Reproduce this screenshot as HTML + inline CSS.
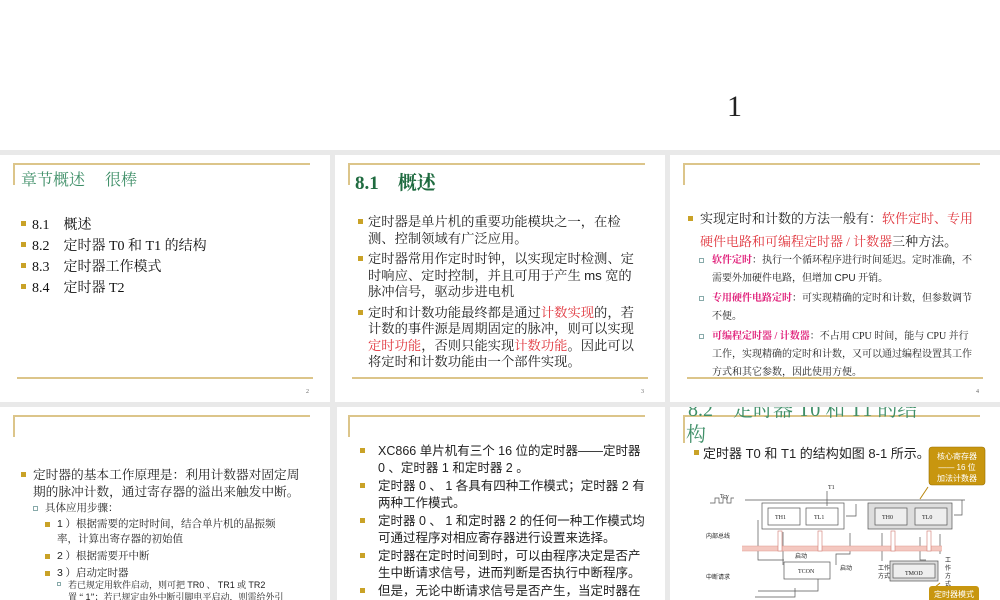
<!DOCTYPE html>
<html><head><meta charset="utf-8"><style>
*{margin:0;padding:0;box-sizing:border-box}
body{width:1000px;height:600px;overflow:hidden;background:#e9e9e9;position:relative;font-family:"Liberation Serif","Noto Serif CJK SC","Noto Sans CJK SC",serif;color:#222}
.top{position:absolute;left:0;top:0;width:1000px;height:150px;background:#fff}
.s{position:absolute;background:#fff;overflow:hidden}
.hl{position:absolute;height:2px;background:#dcc58a}
.vl{position:absolute;width:2px;background:#dcc58a}
.t{position:absolute;white-space:nowrap}
.b{position:absolute;width:5px;height:5px;background:#c9a227}
.sb{position:absolute;width:5px;height:5px;border:1px solid #8aa;}
.pn{position:absolute;font-size:6px;color:#666}
.r{color:#e0343c}
.m{color:#e0207a}
.sans{font-family:"Liberation Sans","Noto Sans CJK SC",sans-serif}
</style></head><body>
<div class="top"><div class="t" style="left:727px;top:90px;font-size:30px;font-family:'Liberation Serif',serif">1</div></div>

<!-- slide 1 -->
<div class="s" style="left:0;top:155px;width:330px;height:247px">
<div class="hl" style="left:13px;top:8px;width:297px"></div><div class="vl" style="left:13px;top:8px;height:22px"></div>
<div class="t" style="left:21px;top:12px;font-size:16px;color:#3f8f68">章节概述　 很棒</div>
<div class="b" style="left:21px;top:66px"></div><div class="t" style="left:32px;top:59px;font-size:14px;color:#111">8.1　概述</div>
<div class="b" style="left:21px;top:87px"></div><div class="t" style="left:32px;top:80px;font-size:14px;color:#111">8.2　定时器 T0 和 T1 的结构</div>
<div class="b" style="left:21px;top:108px"></div><div class="t" style="left:32px;top:101px;font-size:14px;color:#111">8.3　定时器工作模式</div>
<div class="b" style="left:21px;top:129px"></div><div class="t" style="left:32px;top:122px;font-size:14px;color:#111">8.4　定时器 T2</div>
<div class="hl" style="left:17px;top:222px;width:296px"></div>
<div class="pn" style="left:306px;top:234px">2</div>
</div>

<!-- slide 2 -->
<div class="s" style="left:335px;top:155px;width:330px;height:247px">
<div class="hl" style="left:13px;top:8px;width:297px"></div><div class="vl" style="left:13px;top:8px;height:22px"></div>
<div class="t" style="left:20px;top:13px;font-size:19px;color:#1f6b40;font-weight:bold">8.1　概述</div>
<div style="position:absolute;left:33px;top:59px;width:276px;font-size:13.3px;line-height:16.5px">
<div style="position:relative;margin-bottom:4px"><div class="b" style="left:-10px;top:5px"></div>定时器是单片机的重要功能模块之一，在检测、控制领域有广泛应用。</div>
<div style="position:relative;margin-bottom:4px"><div class="b" style="left:-10px;top:5px"></div>定时器常用作定时时钟，以实现定时检测、定时响应、定时控制，并且可用于产生 <span class="sans">ms</span> 宽的脉冲信号，驱动步进电机</div>
<div style="position:relative"><div class="b" style="left:-10px;top:5px"></div>定时和计数功能最终都是通过<span class="r">计数实现</span>的，若计数的事件源是周期固定的脉冲，则可以实现<span class="r">定时功能</span>，否则只能实现<span class="r">计数功能</span>。因此可以将定时和计数功能由一个部件实现。</div>
</div>
<div class="hl" style="left:17px;top:222px;width:296px"></div>
<div class="pn" style="left:306px;top:234px">3</div>
</div>

<!-- slide 3 -->
<div class="s" style="left:670px;top:155px;width:330px;height:247px">
<div class="hl" style="left:13px;top:8px;width:297px"></div><div class="vl" style="left:13px;top:8px;height:22px"></div>
<div style="position:absolute;left:30px;top:52px;width:280px;font-size:13px;line-height:23px">
<div style="position:relative"><div class="b" style="left:-12px;top:9px"></div>实现定时和计数的方法一般有：<span class="r">软件定时、专用硬件电路和可编程定时器 / 计数器</span>三种方法。</div>
</div>
<div style="position:absolute;left:42px;top:97px;width:262px;font-size:10px;line-height:18px">
<div style="position:relative;margin-bottom:2px"><div class="sb" style="left:-13px;top:6px"></div><b class="m">软件定时</b>：执行一个循环程序进行时间延迟。定时准确，不需要外加硬件电路，但增加 <span class="sans">CPU</span> 开销。</div>
<div style="position:relative;margin-bottom:2px"><div class="sb" style="left:-13px;top:6px"></div><b class="m">专用硬件电路定时</b>：可实现精确的定时和计数，但参数调节不便。</div>
<div style="position:relative"><div class="sb" style="left:-13px;top:6px"></div><b class="m">可编程定时器 / 计数器</b>：不占用 CPU 时间，能与 CPU 并行工作，实现精确的定时和计数，又可以通过编程设置其工作方式和其它参数，因此使用方便。</div>
</div>
<div class="hl" style="left:17px;top:222px;width:296px"></div>
<div class="pn" style="left:306px;top:234px">4</div>
</div>

<!-- slide 4 -->
<div class="s" style="left:0;top:407px;width:330px;height:193px">
<div class="hl" style="left:13px;top:8px;width:297px"></div><div class="vl" style="left:13px;top:8px;height:22px"></div>
<div style="position:absolute;left:33px;top:60px;width:275px;font-size:12.7px;line-height:17px">
<div style="position:relative"><div class="b" style="left:-12px;top:5px"></div>定时器的基本工作原理是：利用计数器对固定周期的脉冲计数，通过寄存器的溢出来触发中断。</div></div>
<div style="position:absolute;left:45px;top:94px;width:260px;font-size:10.5px;line-height:16.5px">
<div style="position:relative"><div class="sb" style="left:-12px;top:5px"></div>具体应用步骤：</div></div>
<div style="position:absolute;left:57px;top:110px;width:232px;font-size:10.5px;line-height:15px">
<div style="position:relative;margin-bottom:2px"><div class="b" style="left:-12px;top:5px"></div><span class="sans">1</span> ）根据需要的定时时间，结合单片机的晶振频率，计算出寄存器的初始值</div>
<div style="position:relative;margin-bottom:2px"><div class="b" style="left:-12px;top:5px"></div><span class="sans">2</span> ）根据需要开中断</div>
<div style="position:relative;margin-bottom:2px"><div class="b" style="left:-12px;top:5px"></div><span class="sans">3</span> ）启动定时器</div></div>
<div style="position:absolute;left:68px;top:172px;width:232px;font-size:9px;line-height:12px">
<div style="position:relative"><div class="sb" style="left:-11px;top:3px;width:4px;height:4px"></div>若已规定用软件启动，则可把 <span class="sans">TR0</span> 、 <span class="sans">TR1</span> 或 <span class="sans">TR2</span><br>置 “ <span class="sans">1</span>”；若已规定由外中断引脚电平启动，则需给外引</div></div>
</div>

<!-- slide 5 -->
<div class="s" style="left:337px;top:407px;width:328px;height:193px">
<div class="hl" style="left:11px;top:8px;width:297px"></div><div class="vl" style="left:11px;top:8px;height:22px"></div>
<div style="position:absolute;left:41px;top:36px;width:268px;font-size:12.5px;line-height:16.5px" class="sans">
<div style="position:relative;margin-bottom:2px"><div class="b" style="left:-18px;top:5px"></div>XC866 单片机有三个 16 位的定时器——定时器 0 、定时器 1 和定时器 2 。</div>
<div style="position:relative;margin-bottom:2px"><div class="b" style="left:-18px;top:5px"></div>定时器 0 、 1 各具有四种工作模式；定时器 2 有两种工作模式。</div>
<div style="position:relative;margin-bottom:2px"><div class="b" style="left:-18px;top:5px"></div>定时器 0 、 1 和定时器 2 的任何一种工作模式均可通过程序对相应寄存器进行设置来选择。</div>
<div style="position:relative;margin-bottom:2px"><div class="b" style="left:-18px;top:5px"></div>定时器在定时时间到时，可以由程序决定是否产生中断请求信号，进而判断是否执行中断程序。</div>
<div style="position:relative"><div class="b" style="left:-18px;top:5px"></div>但是，无论中断请求信号是否产生，当定时器在定时时间到时，定时器的溢出标志位</div>
</div></div>

<!-- slide 6 -->
<div class="s" style="left:670px;top:407px;width:330px;height:193px">
<div class="hl" style="left:13px;top:8px;width:297px"></div><div class="vl" style="left:13px;top:8px;height:28px"></div>
<div class="t" style="left:18px;top:-14px;font-size:20px;color:#3f8f68">8.2　定时器 T0 和 T1 的结</div>
<div class="t" style="left:16px;top:11px;font-size:20px;color:#3f8f68">构</div>
<div class="b" style="left:24px;top:43px"></div><div class="t sans" style="left:33px;top:36px;font-size:13px">定时器 T0 和 T1 的结构如图 8-1 所示。</div>
<svg style="position:absolute;left:0;top:0" width="330" height="193" font-size="6" font-family="Liberation Serif,Noto Sans CJK SC,serif">
<g fill="none" stroke="#555" stroke-width="0.7">
<path d="M40 96h5v-5h4v5h4v-5h4v5h4v-5h3"/><path d="M75 93h220"/>
<rect x="92" y="96" width="82" height="26"/><rect x="98" y="101" width="32" height="17"/><rect x="136" y="101" width="32" height="17"/>
<rect x="198" y="96" width="84" height="26" fill="#ddd"/><rect x="205" y="101" width="32" height="17" fill="#eee"/><rect x="245" y="101" width="32" height="17" fill="#eee"/>
<rect x="114" y="155" width="46" height="17"/><rect x="220" y="154" width="48" height="20" fill="#ddd"/><rect x="223" y="157" width="42" height="14" fill="#eee"/>
<path d="M157 84v15M186 97v12h-10M292 93v15h-8M88 113v40h26M113 125v33M180 126v21h-14v11M212 126v28M270 127v20M250 130v23h6M125 181v9h-40M148 172v12h-60"/>
</g>
<rect x="72" y="139" width="200" height="5" fill="#f4c8c0"/><path d="M72 139h200M72 144h200" stroke="#e09a90" stroke-width="0.6"/>
<g fill="#fff" stroke="#d07a70" stroke-width="0.6"><rect x="108" y="124" width="4" height="20"/><rect x="148" y="124" width="4" height="20"/><rect x="221" y="124" width="4" height="20"/><rect x="257" y="124" width="4" height="20"/></g>
<g fill="#222"><text x="105" y="112">TH1</text><text x="144" y="112">TL1</text><text x="212" y="112">TH0</text><text x="252" y="112">TL0</text><text x="128" y="166">TCON</text><text x="235" y="168">TMOD</text><text x="50" y="91">Tcy</text><text x="158" y="82">T1</text><text x="36" y="131">内部总线</text><text x="36" y="172">中断请求</text><text x="125" y="151">启动</text><text x="170" y="163">启动</text><text x="208" y="163">工作</text><text x="208" y="171">方式</text><text x="275" y="155">工</text><text x="275" y="163">作</text><text x="275" y="171">方</text><text x="275" y="179">式</text></g>
<path d="M258 80l-8 12" stroke="#b8860b" fill="none"/>
<rect x="259" y="40" width="56" height="38" rx="3" fill="#c8960f" stroke="#9a7000" stroke-width="0.6"/>
<g fill="#fff" font-size="8" font-family="Liberation Sans,Noto Sans CJK SC,sans-serif" text-anchor="middle"><text x="287" y="52">核心寄存器</text><text x="287" y="63">—— 16 位</text><text x="287" y="74">加法计数器</text></g>
<path d="M270 176l-6 5" stroke="#b8860b"/>
<rect x="259" y="179" width="50" height="20" rx="3" fill="#c8960f"/>
<text x="284" y="190" fill="#fff" font-size="8" text-anchor="middle" font-family="Liberation Sans,Noto Sans CJK SC,sans-serif">定时器模式</text>
</svg>
</div>
</body></html>
